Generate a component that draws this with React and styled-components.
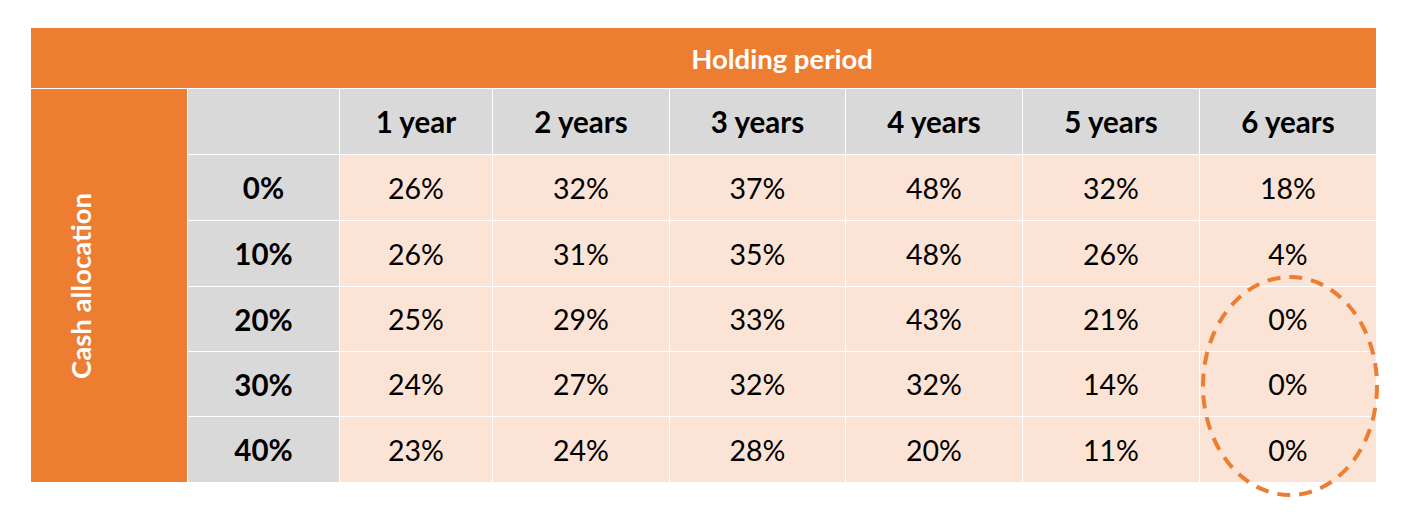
import React from 'react';
import styled, { createGlobalStyle } from 'styled-components';

const GlobalStyle = createGlobalStyle`
    html, body {
        margin: 0;
        padding: 0;
        background: #ffffff;
    }
    body {
        font-family: Lato, "Open Sans", sans-serif;
    }
`;

const Page = styled.div`
    width: 1423px;
    height: 516px;
    padding: 28px 0 0 31px;
    box-sizing: border-box;
    position: relative;
`;

const Grid = styled.div`
    display: grid;
    grid-template-columns: 156px 151px 152px 176px 175px 176px 176px 176px;
    grid-template-rows: 60px 65px 65px 65px 64px 64px 65px;
    gap: 1px;
    width: 1345px;
    background: #ffffff;
`;

const HeaderCell = styled.div`
    grid-column: 1 / -1;
    background: #ed7d31;
    color: #ffffff;
    font-weight: 700;
    font-size: 27.5px;
    display: flex;
    align-items: center;
    justify-content: center;
    padding-left: 157px;
`;

const SideCell = styled.div`
    grid-column: 1;
    grid-row: 2 / -1;
    background: #ed7d31;
    display: flex;
    align-items: center;
    justify-content: flex-start;
    padding-left: 33px;
`;

const SideLabel = styled.span`
    writing-mode: vertical-rl;
    transform: rotate(180deg);
    color: #ffffff;
    font-weight: 700;
    font-size: 27.5px;
    white-space: nowrap;
`;

const Cell = styled.div`
    background: ${(p) => (p.$grey ? '#d9d9d9' : '#fbe4d5')};
    color: #000000;
    font-weight: ${(p) => (p.$bold ? 700 : 400)};
    font-size: ${(p) => (p.$bold ? '29.5px' : '28.5px')};
    display: flex;
    align-items: center;
    justify-content: center;
`;

const Circle = styled.svg`
    position: absolute;
    left: 1201px;
    top: 273px;
    overflow: visible;
`;

const years = ['1 year', '2 years', '3 years', '4 years', '5 years', '6 years'];

const rows = [
    ['0%', '26%', '32%', '37%', '48%', '32%', '18%'],
    ['10%', '26%', '31%', '35%', '48%', '26%', '4%'],
    ['20%', '25%', '29%', '33%', '43%', '21%', '0%'],
    ['30%', '24%', '27%', '32%', '32%', '14%', '0%'],
    ['40%', '23%', '24%', '28%', '20%', '11%', '0%'],
];

const App = () => {
    return (
        <Page>
            <GlobalStyle />
            <Grid>
                <HeaderCell>Holding period</HeaderCell>
                <SideCell>
                    <SideLabel>Cash allocation</SideLabel>
                </SideCell>
                <Cell $grey />
                {years.map((y) => (
                    <Cell key={y} $grey $bold>{y}</Cell>
                ))}
                {rows.map((r) =>
                    r.map((v, i) => (
                        <Cell key={r[0] + i} $grey={i === 0} $bold={i === 0}>{v}</Cell>
                    ))
                )}
            </Grid>
            <Circle width="180" height="224" viewBox="0 0 180 224">
                <ellipse
                    cx="89"
                    cy="113"
                    rx="87"
                    ry="109"
                    fill="none"
                    stroke="#ed7d31"
                    strokeWidth="4"
                    strokeDasharray="13 9"
                />
            </Circle>
        </Page>
    );
};

export default App;
